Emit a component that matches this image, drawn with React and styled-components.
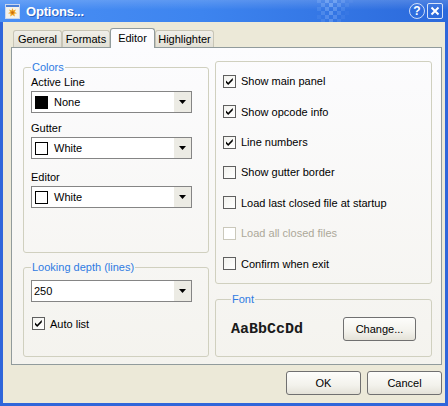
import styled, { createGlobalStyle } from 'styled-components';

const Global = createGlobalStyle`
  html, body {
    margin: 0;
    padding: 0;
    background: #ffffff;
  }
  body {
    font-family: "Liberation Sans", Arial, sans-serif;
    font-size: 11px;
    color: #000000;
  }
`;

const Window = styled.div`
  width: 448px;
  height: 406px;
  box-sizing: border-box;
  padding: 0 3px 3px;
  display: flex;
  flex-direction: column;
  background: #2f66da;
`;

const TitleBar = styled.div`
  height: 22px;
  margin: 0 -3px;
  padding: 0 5px;
  display: flex;
  align-items: center;
  flex: none;
  background:
    linear-gradient(180deg, rgba(255, 255, 255, 0.16) 0%, rgba(255, 255, 255, 0) 45%),
    linear-gradient(90deg, #4a8ff4 0%, #3d84ef 45%, #2b69db 100%);
`;

const Title = styled.span`
  margin-left: 6px;
  color: #ffffff;
  font-weight: bold;
  font-size: 13px;
  letter-spacing: -0.2px;
  text-shadow: 1px 1px 0 rgba(10, 40, 120, 0.45);
`;

const Spacer = styled.div`
  flex: 1;
`;

const Deco = styled.svg`
  margin-right: 56px;
  display: block;
`;

const HelpButton = styled.span`
  width: 16px;
  height: 16px;
  box-sizing: border-box;
  border: 1px solid rgba(255, 255, 255, 0.75);
  border-radius: 50%;
  display: flex;
  align-items: center;
  justify-content: center;
  color: #ffffff;
  font-weight: bold;
  font-size: 12px;
  line-height: 1;
`;

const CloseButton = styled.span`
  width: 16px;
  height: 16px;
  margin-left: 2px;
  box-sizing: border-box;
  border: 1px solid rgba(255, 255, 255, 0.8);
  border-radius: 2px;
  display: flex;
  align-items: center;
  justify-content: center;
`;

const Body = styled.div`
  flex: 1;
  background: #ece9d8;
  padding: 6px 3px 0 8px;
  display: flex;
  flex-direction: column;
`;

const TabStrip = styled.div`
  height: 20px;
  margin-left: 2px;
  display: flex;
  align-items: flex-end;
  position: relative;
  z-index: 2;
`;

const Tab = styled.div`
  width: ${p => p.$w}px;
  height: ${p => (p.$active ? 20 : 17)}px;
  margin-bottom: ${p => (p.$active ? 0 : 1)}px;
  box-sizing: border-box;
  border: 1px solid ${p => (p.$active ? '#919b9c' : '#c8c5b6')};
  border-bottom: none;
  border-radius: 3px 3px 0 0;
  background: ${p => (p.$active ? '#fcfcfe' : 'linear-gradient(180deg, #f0efe9, #e2e0d5)')};
  display: flex;
  align-items: center;
  justify-content: center;
  padding-bottom: ${p => (p.$active ? 2 : 0)}px;
`;

const Panel = styled.div`
  height: 318px;
  margin-top: -1px;
  box-sizing: border-box;
  border: 1px solid #919b9c;
  background: linear-gradient(180deg, #fcfcfe 0%, #f4f3ee 100%);
  padding: 13px 9px 7px 11px;
  display: flex;
  gap: 6px;
`;

const Column = styled.div`
  width: ${p => p.$w}px;
  display: flex;
  flex-direction: column;
  gap: ${p => p.$gap}px;
`;

const Group = styled.fieldset`
  margin: 0;
  min-width: 0;
  box-sizing: border-box;
  border: 1px solid #d0d0bf;
  border-radius: 3px;
  padding: ${p => p.$pad || '0 7px'};
  ${p => (p.$h ? `height: ${p.$h}px; flex: none;` : 'flex: 1;')}
  display: flex;
  flex-direction: column;
`;

const Legend = styled.legend`
  padding: 0 1px;
  color: #2f7be2;
  font-size: 11px;
  line-height: 13px;
`;

const Label = styled.div`
  line-height: 13px;
  margin-top: ${p => p.$top}px;
  margin-bottom: 2px;
`;

const Combo = styled.div`
  width: 161px;
  height: 22px;
  box-sizing: border-box;
  border: 1px solid #858585;
  background: #ffffff;
  display: flex;
  align-items: center;
  margin-top: ${p => p.$top || 0}px;
`;

const Swatch = styled.span`
  width: 13px;
  height: 13px;
  box-sizing: border-box;
  margin-left: 3px;
  border: 1px solid #000000;
  background: ${p => p.$color};
`;

const ComboText = styled.span`
  flex: 1;
  padding-left: ${p => (p.$swatch ? 6 : 2)}px;
`;

const DropButton = styled.span`
  width: 17px;
  height: 100%;
  background: #ecebe4;
  display: flex;
  align-items: center;
  justify-content: center;
`;

const CheckRow = styled.label`
  display: flex;
  align-items: center;
  gap: 5px;
  color: ${p => (p.$disabled ? '#aca899' : '#000000')};
  ${p => (p.$fill ? 'flex: 1;' : '')}
  margin-top: ${p => p.$top || 0}px;
  margin-left: ${p => p.$left || 0}px;
`;

const Box = styled.span`
  width: 13px;
  height: 13px;
  box-sizing: border-box;
  border: 1px solid ${p => (p.$disabled ? '#cac8bb' : '#5f5f5f')};
  background: ${p => (p.$disabled ? '#ffffff' : 'linear-gradient(135deg, #f2f2ee, #ffffff)')};
  display: flex;
  align-items: center;
  justify-content: center;
  flex: none;
`;

const FontRow = styled.div`
  display: flex;
  align-items: center;
  justify-content: space-between;
  padding-top: 11px;
`;

const Sample = styled.span`
  font-family: "Liberation Mono", "Courier New", monospace;
  font-size: 15px;
  font-weight: bold;
  color: #1a1a1a;
`;

const Button = styled.div`
  width: ${p => p.$w}px;
  height: 24px;
  box-sizing: border-box;
  border: 1px solid #707070;
  border-radius: 3px;
  background: linear-gradient(180deg, #fdfdfb 0%, #f3f2ec 60%, #e4e2d8 100%);
  display: flex;
  align-items: center;
  justify-content: center;
`;

const Footer = styled.div`
  display: flex;
  justify-content: flex-end;
  gap: 6px;
  margin-top: 6px;
`;

const Arrow = () => (
  <svg width="7" height="4" viewBox="0 0 7 4">
    <polygon points="0,0 7,0 3.5,4" fill="#000" />
  </svg>
);

const Check = () => (
  <svg width="11" height="11" viewBox="0 0 11 11">
    <path d="M2 4.5 L4.2 6.7 L8.8 2.1 L8.8 4.3 L4.2 8.9 L2 6.7 Z" fill="#000" />
  </svg>
);

const AppIcon = () => (
  <svg width="15" height="15" viewBox="0 0 15 15">
    <rect x="0.5" y="0.5" width="14" height="14" fill="#f4f2ea" stroke="#c9d6ef" />
    <rect x="1" y="1" width="13" height="2" fill="#4a7fd8" />
    <polygon
      points="7.5,4 8.4,6.6 11,5.6 9.6,8 12,9.2 9.3,9.8 9.8,12.5 7.5,11 5.2,12.5 5.7,9.8 3,9.2 5.4,8 4,5.6 6.6,6.6"
      fill="#f0a21e"
    />
    <circle cx="7.5" cy="8.6" r="1.3" fill="#c86a10" />
  </svg>
);

const Checker = () => {
  const cells = [];
  for (let r = 0; r < 6; r++) {
    for (let c = 0; c < 9; c++) {
      if ((r + c) % 2 === 0) {
        const a = Math.max(0, 0.45 - Math.abs(c - 3) * 0.08 - r * 0.03);
        cells.push(<rect key={r + '-' + c} x={c * 4} y={r * 4 - 1} width="4" height="4" fill={`rgba(170,205,255,${a})`} />);
      }
    }
  }
  return <Deco width="36" height="22" viewBox="0 0 36 22">{cells}</Deco>;
};

const ComboBox = ({ color, text, top }) => (
  <Combo $top={top}>
    {color && <Swatch $color={color} />}
    <ComboText $swatch={!!color}>{text}</ComboText>
    <DropButton><Arrow /></DropButton>
  </Combo>
);

const CheckItem = ({ checked, disabled, children, ...rest }) => (
  <CheckRow $disabled={disabled} {...rest}>
    <Box $disabled={disabled}>{checked && <Check />}</Box>
    {children}
  </CheckRow>
);

const options = [
  { text: 'Show main panel', checked: true },
  { text: 'Show opcode info', checked: true },
  { text: 'Line numbers', checked: true },
  { text: 'Show gutter border' },
  { text: 'Load last closed file at startup' },
  { text: 'Load all closed files', disabled: true },
  { text: 'Confirm when exit' },
];

const tabs = [
  { text: 'General', w: 49 },
  { text: 'Formats', w: 48 },
  { text: 'Editor', w: 45, active: true },
  { text: 'Highlighter', w: 59 },
];

export default function App() {
  return (
    <>
      <Global />
      <Window>
        <TitleBar>
          <AppIcon />
          <Title>Options...</Title>
          <Spacer />
          <Checker />
          <HelpButton>?</HelpButton>
          <CloseButton>
            <svg width="10" height="10" viewBox="0 0 10 10">
              <path d="M1.5 1.5 L8.5 8.5 M8.5 1.5 L1.5 8.5" stroke="#fff" strokeWidth="2" />
            </svg>
          </CloseButton>
        </TitleBar>
        <Body>
          <TabStrip>
            {tabs.map(t => (
              <Tab key={t.text} $w={t.w} $active={t.active}>{t.text}</Tab>
            ))}
          </TabStrip>
          <Panel>
            <Column $w={186} $gap={8}>
              <Group>
                <Legend>Colors</Legend>
                <Label $top={2}>Active Line</Label>
                <ComboBox color="#000000" text="None" />
                <Label $top={9}>Gutter</Label>
                <ComboBox color="#ffffff" text="White" />
                <Label $top={12}>Editor</Label>
                <ComboBox color="#ffffff" text="White" />
              </Group>
              <Group $h={96}>
                <Legend>Looking depth (lines)</Legend>
                <ComboBox text="250" top={6} />
                <CheckItem checked $top={15} $left={1}>Auto list</CheckItem>
              </Group>
            </Column>
            <Column $w={217} $gap={9}>
              <Group $pad="4px 7px">
                {options.map(o => (
                  <CheckItem key={o.text} checked={o.checked} disabled={o.disabled} $fill>
                    {o.text}
                  </CheckItem>
                ))}
              </Group>
              <Group $h={64} $pad="0 15px">
                <Legend>Font</Legend>
                <FontRow>
                  <Sample>AaBbCcDd</Sample>
                  <Button $w={73}>Change...</Button>
                </FontRow>
              </Group>
            </Column>
          </Panel>
          <Footer>
            <Button $w={75}>OK</Button>
            <Button $w={75}>Cancel</Button>
          </Footer>
        </Body>
      </Window>
    </>
  );
}
